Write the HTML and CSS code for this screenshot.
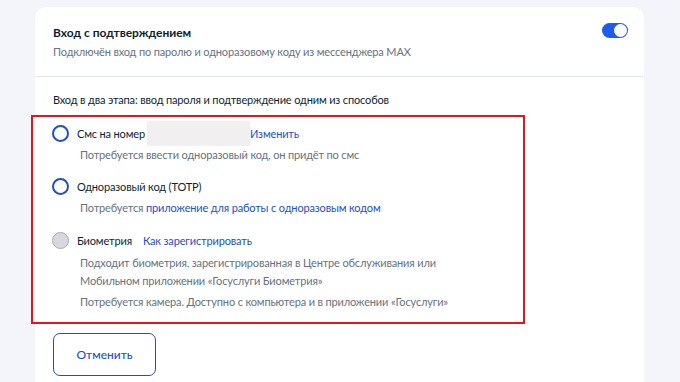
FILE: index.html
```html
<!DOCTYPE html>
<html lang="ru">
<head>
<meta charset="utf-8">
<link rel="stylesheet" href="styles.css">
</head>
<body>
<div class="card">
  <div class="head">
    <div class="head-text">
      <div class="title">Вход с подтверждением</div>
      <div class="sub">Подключён вход по паролю и одноразовому коду из мессенджера MAX</div>
    </div>
    <div class="toggle"><span class="knob"></span></div>
  </div>
  <div class="body">
    <div class="lead">Вход в два этапа: ввод пароля и подтверждение одним из способов</div>
    <div class="opt opt1">
      <span class="radio"></span>
      <span class="label">Смс на номер</span><span class="redact"></span><a class="link">Изменить</a>
    </div>
    <div class="desc">Потребуется ввести одноразовый код, он придёт по смс</div>
    <div class="opt opt2">
      <span class="radio"></span>
      <span class="label">Одноразовый код (TOTP)</span>
    </div>
    <div class="desc">Потребуется <a class="link">приложение для работы с одноразовым кодом</a></div>
    <div class="opt opt3">
      <span class="radio radio-off"></span>
      <span class="label">Биометрия</span><a class="link link-gap">Как зарегистрировать</a>
    </div>
    <div class="desc desc-multi">Подходит биометрия, зарегистрированная в Центре обслуживания или<br>Мобильном приложении «Госуслуги Биометрия»</div>
    <div class="desc desc-last">Потребуется камера. Доступно с компьютера и в приложении «Госуслуги»</div>
    <button class="btn">Отменить</button>
  </div>
</div>
<div class="highlight"></div>
</body>
</html>
```

FILE: styles.css
```css
html, body {
  margin: 0;
  padding: 0;
}
body {
  background: #f3f5fa;
  font-family: Lato, "Noto Sans", sans-serif;
  color: #0b1f33;
  width: 680px;
  height: 382px;
  overflow: hidden;
  position: relative;
}
.card {
  margin: 7px 0 0 35px;
  width: 609px;
  height: 390px;
  background: #ffffff;
  border-radius: 12px;
}
.head {
  display: flex;
  justify-content: space-between;
  align-items: flex-start;
  padding: 17px 16px 15px 18px;
  border-bottom: 1px solid #e4e9f0;
}
.title {
  font-size: 12px;
  font-weight: 700;
  line-height: 18px;
}
.sub {
  margin-top: 1px;
  font-size: 11px;
  line-height: 18px;
  letter-spacing: -0.15px;
  color: #66727f;
}
.toggle {
  margin-top: -1px;
  width: 26px;
  height: 15px;
  border-radius: 8px;
  background: #1d5deb;
  position: relative;
}
.knob {
  position: absolute;
  right: 1px;
  top: 1px;
  width: 13px;
  height: 13px;
  border-radius: 50%;
  background: #fff;
}
.body {
  padding: 14px 18px 0 18px;
}
.lead {
  font-size: 11px;
  line-height: 18px;
  letter-spacing: -0.15px;
}
.opt {
  display: flex;
  align-items: center;
  height: 24px;
  font-size: 11px;
  letter-spacing: -0.15px;
}
.opt1 { margin-top: 12px; }
.opt2 { margin-top: 10px; }
.opt3 { margin-top: 11px; }
.radio {
  box-sizing: border-box;
  width: 17px;
  height: 17px;
  margin-left: -1px;
  margin-right: 8px;
  border-radius: 50%;
  border: 2px solid #1d4fc9;
  flex: none;
}
.radio-off {
  border: 1px solid #a9adb6;
  background: #d6d8de;
}
.label {
  color: #0b1f33;
}
.redact {
  display: inline-block;
  width: 103px;
  height: 25px;
  margin-left: 2px;
  background: #f1efef;
}
.link {
  color: #1d4fc9;
}
.link-gap {
  margin-left: 11px;
}
.desc {
  margin-top: 1px;
  padding-left: 27px;
  font-size: 11px;
  line-height: 18px;
  letter-spacing: -0.15px;
  color: #66727f;
}
.desc-multi {
  margin-top: 2px;
}
.desc-last {
  margin-top: 3px;
}
.btn {
  display: block;
  margin-top: 22px;
  width: 103px;
  height: 43px;
  box-sizing: border-box;
  border: 1.5px solid #1d4fc9;
  border-radius: 7px;
  background: #fff;
  color: #1d4fc9;
  font-family: Lato, "Noto Sans", sans-serif;
  font-size: 12px;
  font-weight: 500;
}
.highlight {
  position: absolute;
  left: 31px;
  top: 115px;
  width: 490px;
  height: 205px;
  border: 2px solid #e8141b;
}
```
